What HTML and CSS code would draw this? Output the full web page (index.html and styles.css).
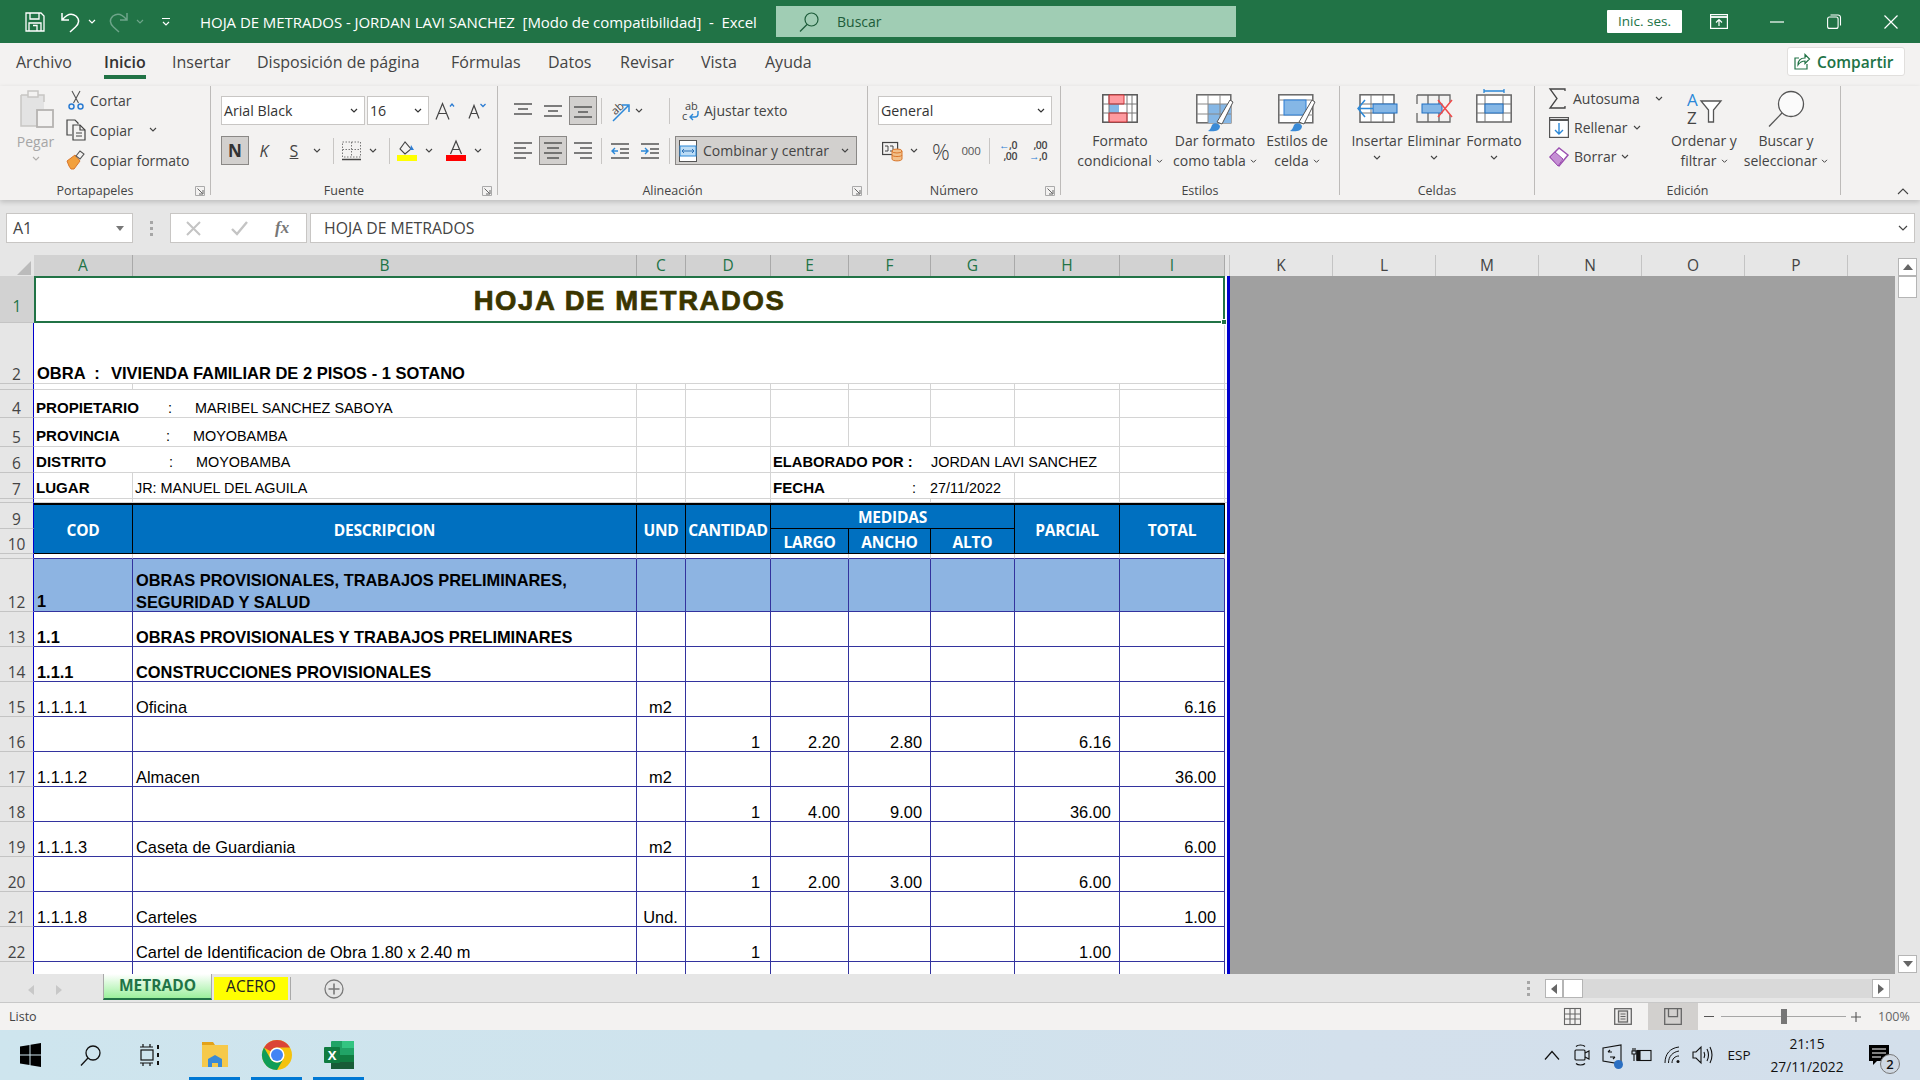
FILE: index.html
```html
<!DOCTYPE html>
<html lang="es">
<head>
<meta charset="utf-8">
<title>HOJA DE METRADOS - Excel</title>
<link rel="stylesheet" href="styles.css">
</head>
<body>
<div class="app">

<header class="titlebar">
  <div class="qat">
    <svg class="q-save" width="20" height="20" viewBox="0 0 20 20" fill="none" stroke="#fff" stroke-width="1.3"><path d="M1 1h15l3 3v15H1z"/><path d="M5 1v6h9V1M4 19v-8h12v8M8 13.500h4v5.500"/></svg>
    <svg class="q-undo" width="20" height="22" viewBox="0 0 20 22" fill="none" stroke="#fff" stroke-width="1.5"><path d="M1 2v7h7M1.500 8.500C6 3 11 2 15 5c4 3.500 3 8-.5 11L9 21"/></svg>
    <svg class="q-ch" width="8" height="6" viewBox="0 0 8 6" fill="none" stroke="#fff" stroke-width="1.200"><path d="M1 1l3 3 3-3"/></svg>
    <svg class="q-redo" width="20" height="22" viewBox="0 0 20 22" fill="none" stroke="#6ea58a" stroke-width="1.5"><path d="M19 2v7h-7M18.500 8.500C14 3 9 2 5 5c-4 3.500-3 8 .5 11l5.500 5"/></svg>
    <svg class="q-ch2" width="8" height="6" viewBox="0 0 8 6" fill="none" stroke="#6ea58a" stroke-width="1.200"><path d="M1 1l3 3 3-3"/></svg>
    <svg class="q-cust" width="10" height="10" viewBox="0 0 10 10" fill="none" stroke="#fff" stroke-width="1.200"><path d="M1 1.500h8M2 5l3 3 3-3"/></svg>
  </div>
  <div class="doc-title">HOJA DE METRADOS - JORDAN LAVI SANCHEZ &nbsp;[Modo de compatibilidad] &nbsp;- &nbsp;Excel</div>
  <div class="search">
    <svg width="20" height="20" viewBox="0 0 20 20" fill="none" stroke="#1d5c3a" stroke-width="1.2"><circle cx="12.500" cy="7.500" r="6.500"/><path d="M8 12.500L1 19.500"/></svg>
    <span>Buscar</span>
  </div>
  <div class="signin">Inic. ses.</div>
  <div class="winbtn w-box"><svg width="18" height="15" viewBox="0 0 18 15" fill="none" stroke="#fff" stroke-width="1.200"><rect x=".6" y=".6" width="16.800" height="13.800"/><path d="M.6 3h16.800" stroke-width="1.800"/><path d="M9 12V6M6 8.500L9 5.500l3 3"/></svg></div>
  <div class="winbtn w-min"><svg width="14" height="2" viewBox="0 0 14 2"><path d="M0 1h14" stroke="#fff" stroke-width="1.200"/></svg></div>
  <div class="winbtn w-res"><svg width="14" height="15" viewBox="0 0 14 15" fill="none" stroke="#fff" stroke-width="1.100"><rect x=".6" y="3" width="10.500" height="11.400" rx="2"/><path d="M3.500 1h7.500a2.500 2.500 0 0 1 2.500 2.500v8"/></svg></div>
  <div class="winbtn w-close"><svg width="14" height="14" viewBox="0 0 14 14"><path d="M.5.5l13 13M13.500.5l-13 13" stroke="#fff" stroke-width="1.200"/></svg></div>
</header>

<nav class="menubar">
  <span class="m m-arch">Archivo</span>
  <span class="m m-ini">Inicio</span>
  <span class="m m-ins">Insertar</span>
  <span class="m m-dis">Disposición de página</span>
  <span class="m m-for">Fórmulas</span>
  <span class="m m-dat">Datos</span>
  <span class="m m-rev">Revisar</span>
  <span class="m m-vis">Vista</span>
  <span class="m m-ayu">Ayuda</span>
  <div class="share">
    <svg width="16" height="17" viewBox="0 0 16 17" fill="none" stroke="#217346" stroke-width="1.200"><path d="M5 5H1v11h12v-5"/><path d="M4 12c0-5 3-7 7-7V1.500L15.500 6 11 10.500V8c-3 0-5 1-7 4z"/></svg>
    <span>Compartir</span>
  </div>
</nav>

<section class="ribbon">

  <div class="grp g-clip">
    <div class="grp-body clip-body">
      <div class="paste">
        <svg width="34" height="38" viewBox="0 0 34 38" fill="none" stroke="#c8c6c4" stroke-width="1.500"><rect x="1" y="5" width="23" height="31" fill="#e3e3e3" stroke="none"/><path d="M1 5h23v7M1 5v31h17"/><rect x="8" y="1" width="10" height="6" fill="#f3f2f1"/><rect x="17" y="20" width="16" height="17" fill="#f3f2f1" stroke="#b5b3b1" stroke-width="1.800"/></svg>
        <span class="big-t dim">Pegar</span>
        <svg class="chv" width="8" height="6" viewBox="0 0 8 6" fill="none" stroke="#b0aeac" stroke-width="1.100"><path d="M1 1l3 3 3-3"/></svg>
      </div>
      <div class="clip-list">
        <div class="cl-row">
          <svg width="20" height="20" viewBox="0 0 20 20" fill="none" stroke="#555" stroke-width="1.100"><path d="M6 1l6.500 12M14 1L7.500 13"/><circle cx="5.500" cy="16.500" r="2.500" stroke="#2b7cd3" stroke-width="1.500"/><circle cx="14.500" cy="16.500" r="2.500" stroke="#2b7cd3" stroke-width="1.500"/></svg>
          <span>Cortar</span>
        </div>
        <div class="cl-row">
          <svg width="20" height="22" viewBox="0 0 20 22" fill="none" stroke="#444" stroke-width="1.200"><path d="M6 16H1V1h8l3 3v1"/><path d="M7 6h7l5 5v10H7z"/><path d="M14 6v5h5M10 14h6M10 17h6"/></svg>
          <span>Copiar</span>
          <svg class="cp-ch" width="8" height="6" viewBox="0 0 8 6" fill="none" stroke="#444" stroke-width="1.100"><path d="M1 1l3 3 3-3"/></svg>
        </div>
        <div class="cl-row">
          <svg width="20" height="20" viewBox="0 0 20 20" fill="none"><path d="M1 11L9 5l5 6-6 8H5l-2-3z" fill="#f2a03d" stroke="#d9762b"/><path d="M10 6l4-5 4 3-4 5z" fill="#f3f2f1" stroke="#555" stroke-width="1.100"/></svg>
          <span>Copiar formato</span>
        </div>
      </div>
    </div>
    <div class="grp-foot"><span class="grp-name">Portapapeles</span><span class="launch"><svg width="10" height="10" viewBox="0 0 10 10" fill="none" stroke="#666"><path d="M.5 9.500V.5h9v9z" stroke="#aaa"/><path d="M2.500 2.500l5 5M8 4v4H4"/></svg></span></div>
  </div>

  <div class="grp g-font">
    <div class="grp-body tools">
      <div class="tb">
        <div class="combo c-font"><span>Arial Black</span><svg width="8" height="6" viewBox="0 0 8 6" fill="none" stroke="#333" stroke-width="1.200"><path d="M1 1l3 3 3-3"/></svg></div>
        <div class="combo c-size"><span>16</span><svg width="8" height="6" viewBox="0 0 8 6" fill="none" stroke="#333" stroke-width="1.200"><path d="M1 1l3 3 3-3"/></svg></div>
        <div class="bt w32"><svg width="20" height="18" viewBox="0 0 20 18" fill="none" stroke="#444" stroke-width="1.200"><path d="M1 17.500L7.500 1.500 14 17.500M3.500 11.500h8"/><path d="M15 4.500L17 2l2 2.500" stroke="#2b7cd3" stroke-width="1.300"/></svg></div>
        <div class="bt w32"><svg width="18" height="16" viewBox="0 0 18 16" fill="none" stroke="#444" stroke-width="1.200"><path d="M1 15.500L6 2.500l5 13M3 10.500h6"/><path d="M12.500 1L15 3.500 17.500 1" stroke="#2b7cd3" stroke-width="1.300"/></svg></div>
      </div>
      <div class="tb">
        <div class="bt w28 on"><b class="t-n">N</b></div>
        <div class="bt w30"><i class="t-k">K</i></div>
        <div class="bt w30"><span class="t-s">S</span></div>
        <div class="bt w16"><svg width="8" height="6" viewBox="0 0 8 6" fill="none" stroke="#444" stroke-width="1.100"><path d="M1 1l3 3 3-3"/></svg></div>
        <div class="bt w16"><i class="sep"></i></div>
        <div class="bt w20"><svg width="19" height="20" viewBox="0 0 19 20" fill="none"><path d="M.5 1h18v15H.5zM9.500 1v15M.5 8.500h18" stroke="#777" stroke-dasharray="1.500 1.500"/><path d="M0 18.500h19" stroke="#444" stroke-width="1.500"/></svg></div>
        <div class="bt w24"><svg width="8" height="6" viewBox="0 0 8 6" fill="none" stroke="#444" stroke-width="1.100"><path d="M1 1l3 3 3-3"/></svg></div>
        <div class="bt w8"><i class="sep"></i></div>
        <div class="bt w28"><svg width="20" height="20" viewBox="0 0 20 20" fill="none"><path d="M8 1L3 8l5 5 6-5z" stroke="#444" stroke-width="1.100"/><path d="M14 4l3 5h-4z" fill="#2b7cd3"/><rect y="14" width="20" height="6" fill="#ffff00"/></svg></div>
        <div class="bt w16"><svg width="8" height="6" viewBox="0 0 8 6" fill="none" stroke="#444" stroke-width="1.100"><path d="M1 1l3 3 3-3"/></svg></div>
        <div class="bt w38"><svg width="20" height="21" viewBox="0 0 20 21" fill="none"><path d="M4.500 14L10 1l5.500 13M6.500 9.500h7" stroke="#444" stroke-width="1.200"/><rect y="15" width="20" height="6" fill="#ff0000"/></svg></div>
        <div class="bt w6"><svg class="ovr" width="8" height="6" viewBox="0 0 8 6" fill="none" stroke="#444" stroke-width="1.100"><path d="M1 1l3 3 3-3"/></svg></div>
      </div>
    </div>
    <div class="grp-foot"><span class="grp-name">Fuente</span><span class="launch"><svg width="10" height="10" viewBox="0 0 10 10" fill="none" stroke="#666"><path d="M.5 9.500V.5h9v9z" stroke="#aaa"/><path d="M2.500 2.500l5 5M8 4v4H4"/></svg></span></div>
  </div>

  <div class="grp g-align">
    <div class="grp-body tools">
      <div class="tb">
        <div class="bt w28"><svg width="18" height="15" viewBox="0 0 18 15" stroke="#555" stroke-width="1.300"><path d="M0 1h18M4 6h10M0 11h18"/></svg></div>
        <div class="bt w28 gap2"><svg width="18" height="15" viewBox="0 0 18 15" stroke="#555" stroke-width="1.300"><path d="M0 3h18M4 8h10M0 13h18"/></svg></div>
        <div class="bt w28 on gap2"><svg width="18" height="15" viewBox="0 0 18 15" stroke="#555" stroke-width="1.300"><path d="M0 4h18M4 9h10M0 14h18"/></svg></div>
        <div class="bt w8"><i class="sep"></i></div>
        <div class="bt w30"><svg width="22" height="22" viewBox="0 0 22 22" fill="none"><text x="3" y="13" transform="rotate(-42 8 10)" class="svg-ab">ab</text><path d="M4 21L19 6M13 5h7v7" stroke="#2b88d8" stroke-width="1.500"/></svg></div>
        <div class="bt w8"><svg class="ovr" width="8" height="6" viewBox="0 0 8 6" fill="none" stroke="#444" stroke-width="1.100"><path d="M1 1l3 3 3-3"/></svg></div>
        <div class="bt w22"></div>
        <div class="bt w8"><i class="sep"></i></div>
        <div class="wrap-b">
          <svg width="18" height="22" viewBox="0 0 18 22"><text x="3" y="10" class="svg-ab">ab</text><text x="0" y="20" class="svg-ab">c</text><path d="M16 11v3a3 3 0 0 1-3 3H8M11 14l-3 3 3 3" fill="none" stroke="#2b88d8" stroke-width="1.400"/></svg>
          <span>Ajustar texto</span>
        </div>
      </div>
      <div class="tb">
        <div class="bt w28"><svg width="18" height="17" viewBox="0 0 18 17" stroke="#555" stroke-width="1.300"><path d="M0 1h18M0 6h12M0 11h18M0 16h12"/></svg></div>
        <div class="bt w28 on gap2"><svg width="18" height="17" viewBox="0 0 18 17" stroke="#555" stroke-width="1.300"><path d="M0 1h18M3 6h12M0 11h18M3 16h12"/></svg></div>
        <div class="bt w28 gap2"><svg width="18" height="17" viewBox="0 0 18 17" stroke="#555" stroke-width="1.300"><path d="M0 1h18M6 6h12M0 11h18M6 16h12"/></svg></div>
        <div class="bt w8"><i class="sep"></i></div>
        <div class="bt w30"><svg width="18" height="16" viewBox="0 0 18 16" fill="none"><path d="M0 1h18M9 6h9M9 10h9M0 15h18" stroke="#555" stroke-width="1.300"/><path d="M7 8H1M4 5L1 8l3 3" stroke="#2b88d8" stroke-width="1.400"/></svg></div>
        <div class="bt w30"><svg width="18" height="16" viewBox="0 0 18 16" fill="none"><path d="M0 1h18M9 6h9M9 10h9M0 15h18" stroke="#555" stroke-width="1.300"/><path d="M0 8h6M4 5l3 3-3 3" stroke="#2b88d8" stroke-width="1.400"/></svg></div>
        <div class="bt w8"><i class="sep"></i></div>
        <div class="merge">
          <svg width="18" height="22" viewBox="0 0 18 22" fill="#fff"><rect x=".5" y=".5" width="17" height="21" stroke="#555"/><rect x="1" y="6" width="16" height="10" fill="#bcdcf5" stroke="#2b88d8"/><path d="M3 11h12M5 9l-2 2 2 2M13 9l2 2-2 2" fill="none" stroke="#2b6fb3"/></svg>
          <span>Combinar y centrar</span>
          <svg class="m-ch" width="8" height="6" viewBox="0 0 8 6" fill="none" stroke="#444" stroke-width="1.100"><path d="M1 1l3 3 3-3"/></svg>
        </div>
      </div>
    </div>
    <div class="grp-foot"><span class="grp-name">Alineación</span><span class="launch"><svg width="10" height="10" viewBox="0 0 10 10" fill="none" stroke="#666"><path d="M.5 9.500V.5h9v9z" stroke="#aaa"/><path d="M2.500 2.500l5 5M8 4v4H4"/></svg></span></div>
  </div>

  <div class="grp g-num">
    <div class="grp-body tools">
      <div class="tb">
        <div class="combo c-num"><span>General</span><svg width="8" height="6" viewBox="0 0 8 6" fill="none" stroke="#333" stroke-width="1.200"><path d="M1 1l3 3 3-3"/></svg></div>
      </div>
      <div class="tb">
        <div class="bt w28"><svg width="21" height="20" viewBox="0 0 21 20" fill="none"><rect x=".6" y="1.500" width="15" height="12" stroke="#444" stroke-width="1.200"/><path d="M3 5h3v5H3M8 5h3v5H8" stroke="#444"/><path d="M10 10v8c0 2.500 10 2.500 10 0v-8" fill="#f2c08a" stroke="#d9762b"/><ellipse cx="15" cy="10" rx="5" ry="2" fill="#f2c08a" stroke="#d9762b"/><path d="M10 14c0 2 10 2 10 0" stroke="#d9762b"/></svg></div>
        <div class="bt w16"><svg width="8" height="6" viewBox="0 0 8 6" fill="none" stroke="#444" stroke-width="1.100"><path d="M1 1l3 3 3-3"/></svg></div>
        <div class="bt w38"><span class="t-pct">%</span></div>
        <div class="bt w22"><span class="t-000">000</span></div>
        <div class="bt w14"><i class="sep"></i></div>
        <div class="bt w24"><span class="dec"><span class="dec-a">←<span class="dec-k">,0</span></span><span>,00</span></span></div>
        <div class="bt w36"><span class="dec"><span>,00</span><span class="dec-a">→<span class="dec-k">,0</span></span></span></div>
      </div>
    </div>
    <div class="grp-foot"><span class="grp-name">Número</span><span class="launch"><svg width="10" height="10" viewBox="0 0 10 10" fill="none" stroke="#666"><path d="M.5 9.500V.5h9v9z" stroke="#aaa"/><path d="M2.500 2.500l5 5M8 4v4H4"/></svg></span></div>
  </div>

  <div class="grp g-sty">
    <div class="grp-body bigs sty-cols">
      <div class="big">
        <div class="big-ic"><svg width="36" height="29" viewBox="0 0 36 29" fill="#fff"><rect x=".8" y=".8" width="34.400" height="27.400" stroke="#555" stroke-width="1.500"/><rect x="7" y="1" width="15" height="9" fill="#ff9a9f"/><rect x="7" y="10" width="10" height="9" fill="#85b7e6"/><rect x="7" y="19" width="18" height="9" fill="#ff9a9f"/><path d="M7 1v27M25 1v27M30 1v27M1 10h34M1 19h34" stroke="#777" fill="none"/><path d="M7 1h15v9H7zM7 19h18v9H7z" stroke="#d13438" fill="none"/></svg></div>
        <span class="big-t">Formato</span><span class="big-t">condicional <svg width="7" height="5" viewBox="0 0 8 6" fill="none" stroke="#444" stroke-width="1.200"><path d="M1 1l3 3 3-3"/></svg></span>
      </div>
      <div class="big">
        <div class="big-ic"><svg width="38" height="40" viewBox="0 0 38 40" fill="#fff"><rect x=".8" y=".8" width="34" height="28" stroke="#666" stroke-width="1.500"/><rect x="12" y="10" width="23" height="19" fill="#85b7e6"/><path d="M12 1v28M24 1v28M1 10h34M1 20h34" stroke="#888" fill="none"/><path d="M21 28L34 6l3 2-11 22z" fill="#fff" stroke="#555"/><path d="M12 37c2-1 3-3 4-6 2-3 7-2 8 1 0 5-6 6-12 5z" fill="#3a8ad6"/></svg></div>
        <span class="big-t">Dar formato</span><span class="big-t">como tabla <svg width="7" height="5" viewBox="0 0 8 6" fill="none" stroke="#444" stroke-width="1.200"><path d="M1 1l3 3 3-3"/></svg></span>
      </div>
      <div class="big">
        <div class="big-ic"><svg width="38" height="40" viewBox="0 0 38 40" fill="#fff"><rect x=".8" y=".8" width="34" height="28" stroke="#666" stroke-width="1.500"/><path d="M1 6h34M1 21h34" stroke="#888" fill="none"/><rect x="6" y="6" width="22" height="15" fill="#85b7e6" stroke="#2b7cd3"/><path d="M21 28L34 6l3 2-11 22z" fill="#fff" stroke="#555"/><path d="M12 37c2-1 3-3 4-6 2-3 7-2 8 1 0 5-6 6-12 5z" fill="#3a8ad6"/></svg></div>
        <span class="big-t">Estilos de</span><span class="big-t">celda <svg width="7" height="5" viewBox="0 0 8 6" fill="none" stroke="#444" stroke-width="1.200"><path d="M1 1l3 3 3-3"/></svg></span>
      </div>
    </div>
    <div class="grp-foot"><span class="grp-name">Estilos</span></div>
  </div>

  <div class="grp g-cel">
    <div class="grp-body bigs cel-cols">
      <div class="big">
        <div class="big-ic"><svg width="40" height="29" viewBox="0 0 40 29" fill="#fff"><rect x="3" y=".8" width="34" height="27.400" stroke="#666" stroke-width="1.500"/><path d="M14 1v27M26 1v27M3 10h34M3 19h34" stroke="#777" fill="none"/><rect x="16" y="10" width="24" height="9" fill="#85b7e6" stroke="#1f6fc2"/><path d="M16 14.500H2M8 6L1 14.500 8 23" fill="none" stroke="#2b88d8" stroke-width="1.500"/></svg></div>
        <span class="big-t">Insertar</span>
        <svg class="chv" width="8" height="6" viewBox="0 0 8 6" fill="none" stroke="#444" stroke-width="1.100"><path d="M1 1l3 3 3-3"/></svg>
      </div>
      <div class="big">
        <div class="big-ic"><svg width="37" height="29" viewBox="0 0 37 29" fill="#fff"><path d="M1 1h33v7M1 1v9M1 19v9h33v-7M12 1v9M23 1v9M12 19v9M23 19v9" stroke="#666" stroke-width="1.300" fill="none"/><rect x="6" y="10" width="20" height="9" fill="#85b7e6" stroke="#1f6fc2"/><path d="M22 6l14 17M36 6L22 23" stroke="#f04a4a" stroke-width="1.500"/></svg></div>
        <span class="big-t">Eliminar</span>
        <svg class="chv" width="8" height="6" viewBox="0 0 8 6" fill="none" stroke="#444" stroke-width="1.100"><path d="M1 1l3 3 3-3"/></svg>
      </div>
      <div class="big">
        <div class="big-ic ic-up"><svg width="36" height="34" viewBox="0 0 36 34" fill="#fff"><path d="M8 2h20M8 0v4M28 0v4" stroke="#2b88d8" fill="none" stroke-width="1.300"/><rect x=".8" y="6" width="34.400" height="27" stroke="#666" stroke-width="1.500"/><path d="M9 6v27M27 6v27M1 15h34M1 24h34" stroke="#777" fill="none"/><rect x="9" y="15" width="18" height="9" fill="#85b7e6" stroke="#1f6fc2"/></svg></div>
        <span class="big-t">Formato</span>
        <svg class="chv" width="8" height="6" viewBox="0 0 8 6" fill="none" stroke="#444" stroke-width="1.100"><path d="M1 1l3 3 3-3"/></svg>
      </div>
    </div>
    <div class="grp-foot"><span class="grp-name">Celdas</span></div>
  </div>

  <div class="grp g-edi">
    <div class="grp-body bigs edi-cols">
      <div class="edi-list">
        <div class="ed-row">
          <svg class="sigma" width="17" height="21" viewBox="0 0 17 21" fill="none" stroke="#444" stroke-width="1.300"><path d="M16 3V1H1l7 9.500L1 20h15v-2"/></svg>
          <span>Autosuma</span>
          <svg class="ed-ch1" width="8" height="6" viewBox="0 0 8 6" fill="none" stroke="#444" stroke-width="1.100"><path d="M1 1l3 3 3-3"/></svg>
        </div>
        <div class="ed-row">
          <svg width="20" height="21" viewBox="0 0 20 21" fill="#fff"><rect x=".6" y=".6" width="18.800" height="19.800" stroke="#555" stroke-width="1.200"/><path d="M1 3h18" stroke="#555" stroke-width="2"/><path d="M10 6v11M6 13l4 4 4-4" fill="none" stroke="#2b88d8" stroke-width="1.400"/></svg>
          <span>Rellenar</span>
          <svg width="8" height="6" viewBox="0 0 8 6" fill="none" stroke="#444" stroke-width="1.100"><path d="M1 1l3 3 3-3"/></svg>
        </div>
        <div class="ed-row">
          <svg width="20" height="20" viewBox="0 0 20 20"><path d="M1 10L10 1l9 7-9 11z" fill="#fff" stroke="#9b4fb0" stroke-width="1.500"/><path d="M1 10l5-5 8 7-5 7z" fill="#c58fd4" stroke="#9b4fb0"/></svg>
          <span>Borrar</span>
          <svg width="8" height="6" viewBox="0 0 8 6" fill="none" stroke="#444" stroke-width="1.100"><path d="M1 1l3 3 3-3"/></svg>
        </div>
      </div>
      <div class="big">
        <div class="big-ic ic-mid"><svg width="36" height="34" viewBox="0 0 36 34"><text x="1" y="15" class="svg-az a">A</text><text x="1" y="33" class="svg-az">Z</text><path d="M15 10h20l-7.500 9v12h-5V19z" fill="#fff" stroke="#555" stroke-width="1.300"/></svg></div>
        <span class="big-t">Ordenar y</span><span class="big-t">filtrar <svg width="7" height="5" viewBox="0 0 8 6" fill="none" stroke="#444" stroke-width="1.200"><path d="M1 1l3 3 3-3"/></svg></span>
      </div>
      <div class="big">
        <div class="big-ic ic-mid"><svg width="36" height="36" viewBox="0 0 36 36" fill="none" stroke="#555" stroke-width="1.300"><circle cx="23" cy="13" r="12.500" fill="#fbfbfb"/><path d="M14 22L1 35.500"/></svg></div>
        <span class="big-t">Buscar y</span><span class="big-t">seleccionar <svg width="7" height="5" viewBox="0 0 8 6" fill="none" stroke="#444" stroke-width="1.200"><path d="M1 1l3 3 3-3"/></svg></span>
      </div>
    </div>
    <div class="grp-foot"><span class="grp-name">Edición</span></div>
  </div>

  <div class="collapse"><svg width="12" height="7" viewBox="0 0 12 7" fill="none" stroke="#444" stroke-width="1.100"><path d="M1 6l5-5 5 5"/></svg></div>
</section>

<section class="formula">
  <div class="namebox"><span>A1</span><svg width="8" height="5" viewBox="0 0 8 5"><path d="M0 0h8L4 5z" fill="#777"/></svg></div>
  <div class="fdots"><i></i><i></i><i></i></div>
  <div class="fbtns">
    <svg width="15" height="15" viewBox="0 0 15 15" stroke="#c4c4c4" stroke-width="2"><path d="M1 1l13 13M14 1L1 14"/></svg>
    <svg width="17" height="15" viewBox="0 0 17 15" fill="none" stroke="#c4c4c4" stroke-width="2.400"><path d="M1 8l5 5L16 1"/></svg>
    <span class="fx">fx</span>
  </div>
  <div class="fbox"><span>HOJA DE METRADOS</span><svg width="10" height="6" viewBox="0 0 10 6" fill="none" stroke="#444" stroke-width="1.200"><path d="M1 1l4 4 4-4"/></svg></div>
</section>

<section class="grid-wrap">
  <div class="grid-main">
    <div class="colhead">
      <div class="corner"><svg width="14" height="14" viewBox="0 0 14 14"><path d="M14 0v14H0z" fill="#bbb"/></svg></div>
      <div class="ch sel a">A</div><div class="ch sel b">B</div><div class="ch sel c">C</div><div class="ch sel d">D</div><div class="ch sel e">E</div><div class="ch sel f">F</div><div class="ch sel g">G</div><div class="ch sel h">H</div><div class="ch sel i">I</div>
      <div class="ch j"></div>
      <div class="ch k">K</div><div class="ch k">L</div><div class="ch k">M</div><div class="ch k">N</div><div class="ch k">O</div><div class="ch k">P</div><div class="ch rest"></div>
    </div>
    <div class="sheet-row">
      <div class="sheet-clip">
      <table class="sheet">
        <colgroup><col class="k-rh"><col class="k-a"><col class="k-b"><col class="k-c"><col class="k-d"><col class="k-e"><col class="k-f"><col class="k-g"><col class="k-h"><col class="k-i"><col class="k-j"></colgroup>
        <tr class="h47"><th class="sel">1</th><td colspan="9" class="title"><span>HOJA DE METRADOS</span><i class="handle"></i></td><td class="jc"></td></tr>
        <tr class="h61"><th>2</th><td colspan="9" class="obra bold"><span class="obra-k">OBRA &nbsp;:</span>VIVIENDA FAMILIAR DE 2 PISOS - 1 SOTANO</td><td class="jc"></td></tr>
        <tr class="h6"><th></th><td></td><td></td><td></td><td></td><td></td><td></td><td></td><td></td><td></td><td class="jc"></td></tr>
        <tr class="h28"><th>4</th><td colspan="2" class="info"><b class="lab p1">PROPIETARIO</b><span class="col p2">:</span><span class="val">MARIBEL SANCHEZ SABOYA</span></td><td></td><td></td><td></td><td></td><td></td><td></td><td></td><td class="jc"></td></tr>
        <tr class="h29"><th>5</th><td colspan="2" class="info"><b class="lab p3">PROVINCIA</b><span class="col p2">:</span><span class="val">MOYOBAMBA</span></td><td></td><td></td><td></td><td></td><td></td><td></td><td></td><td class="jc"></td></tr>
        <tr class="h26"><th>6</th><td colspan="2" class="info"><b class="lab p4">DISTRITO</b><span class="col p2">:</span><span class="val">MOYOBAMBA</span></td><td></td><td></td><td colspan="4" class="info"><b class="lab p5">ELABORADO POR :</b><span class="val v2">JORDAN LAVI SANCHEZ</span></td><td></td><td class="jc"></td></tr>
        <tr class="h26"><th>7</th><td class="info"><b class="lab">LUGAR</b></td><td class="plain">JR: MANUEL DEL AGUILA</td><td></td><td></td><td colspan="3" class="info"><b class="lab p6">FECHA</b><span class="col p7">:</span><span class="val v3">27/11/2022</span></td><td></td><td></td><td class="jc"></td></tr>
        <tr class="h4"><th></th><td></td><td></td><td></td><td></td><td></td><td></td><td></td><td></td><td></td><td class="jc"></td></tr>
        <tr class="h26 hd"><th>9</th><td rowspan="2">COD</td><td rowspan="2">DESCRIPCION</td><td rowspan="2">UND</td><td rowspan="2">CANTIDAD</td><td colspan="3">MEDIDAS</td><td rowspan="2">PARCIAL</td><td rowspan="2">TOTAL</td><td class="jc"></td></tr>
        <tr class="h25 hd hd2"><th>10</th><td>LARGO</td><td>ANCHO</td><td>ALTO</td><td class="jc"></td></tr>
        <tr class="h5 sp"><th></th><td></td><td></td><td></td><td></td><td></td><td></td><td></td><td></td><td></td><td class="jc"></td></tr>
        <tr class="h53 d fill"><th>12</th><td class="bold">1</td><td class="bold"><div class="two">OBRAS PROVISIONALES, TRABAJOS PRELIMINARES,<br>SEGURIDAD Y SALUD</div></td><td></td><td></td><td></td><td></td><td></td><td></td><td></td><td class="jc"></td></tr>
        <tr class="h35 d"><th>13</th><td class="bold">1.1</td><td class="bold">OBRAS PROVISIONALES Y TRABAJOS PRELIMINARES</td><td></td><td></td><td></td><td></td><td></td><td></td><td></td><td class="jc"></td></tr>
        <tr class="h35 d"><th>14</th><td class="bold">1.1.1</td><td class="bold">CONSTRUCCIONES PROVISIONALES</td><td></td><td></td><td></td><td></td><td></td><td></td><td></td><td class="jc"></td></tr>
        <tr class="h35 d"><th>15</th><td>1.1.1.1</td><td>Oficina</td><td class="ctr">m2</td><td></td><td></td><td></td><td></td><td></td><td class="num">6.16</td><td class="jc"></td></tr>
        <tr class="h35 d"><th>16</th><td></td><td></td><td></td><td class="num q">1</td><td class="num">2.20</td><td class="num">2.80</td><td></td><td class="num">6.16</td><td></td><td class="jc"></td></tr>
        <tr class="h35 d"><th>17</th><td>1.1.1.2</td><td>Almacen</td><td class="ctr">m2</td><td></td><td></td><td></td><td></td><td></td><td class="num">36.00</td><td class="jc"></td></tr>
        <tr class="h35 d"><th>18</th><td></td><td></td><td></td><td class="num q">1</td><td class="num">4.00</td><td class="num">9.00</td><td></td><td class="num">36.00</td><td></td><td class="jc"></td></tr>
        <tr class="h35 d"><th>19</th><td>1.1.1.3</td><td>Caseta de Guardiania</td><td class="ctr">m2</td><td></td><td></td><td></td><td></td><td></td><td class="num">6.00</td><td class="jc"></td></tr>
        <tr class="h35 d"><th>20</th><td></td><td></td><td></td><td class="num q">1</td><td class="num">2.00</td><td class="num">3.00</td><td></td><td class="num">6.00</td><td></td><td class="jc"></td></tr>
        <tr class="h35 d"><th>21</th><td>1.1.1.8</td><td>Carteles</td><td class="ctr">Und.</td><td></td><td></td><td></td><td></td><td></td><td class="num">1.00</td><td class="jc"></td></tr>
        <tr class="h35 d"><th>22</th><td></td><td>Cartel de Identificacion de Obra 1.80 x 2.40 m</td><td></td><td class="num q">1</td><td></td><td></td><td></td><td class="num">1.00</td><td></td><td class="jc"></td></tr>
        <tr class="h35 d"><th></th><td></td><td></td><td></td><td></td><td></td><td></td><td></td><td></td><td></td><td class="jc"></td></tr>
      </table>
      </div>
      <div class="outside"></div>
    </div>
  </div>
  <aside class="vscroll">
    <div class="sb-btn"><svg width="10" height="6" viewBox="0 0 10 6"><path d="M5 0l5 6H0z" fill="#666"/></svg></div>
    <div class="sb-thumb"></div>
    <div class="sb-fill"></div>
    <div class="sb-btn"><svg width="10" height="6" viewBox="0 0 10 6"><path d="M0 0h10L5 6z" fill="#666"/></svg></div>
  </aside>
</section>

<section class="tabbar">
  <div class="tabnav">
    <svg width="6" height="10" viewBox="0 0 6 10"><path d="M6 0v10L0 5z" fill="#c8c8c8"/></svg>
    <svg width="6" height="10" viewBox="0 0 6 10"><path d="M0 0v10l6-5z" fill="#c8c8c8"/></svg>
  </div>
  <div class="tab t-met">METRADO</div>
  <div class="tab t-ace">ACERO</div>
  <div class="tab-end"></div>
  <div class="addsheet"><svg width="20" height="20" viewBox="0 0 20 20" fill="none" stroke="#7a7a7a" stroke-width="1.300"><circle cx="10" cy="10" r="9"/><path d="M10 4.500v11M4.500 10h11" stroke-width="1.600"/></svg></div>
  <div class="hdots"><i></i><i></i><i></i></div>
  <div class="hscroll">
    <div class="hb"><svg width="6" height="10" viewBox="0 0 6 10"><path d="M6 0v10L0 5z" fill="#666"/></svg></div>
    <div class="hthumb"></div>
    <div class="htrack"></div>
    <div class="hb"><svg width="6" height="10" viewBox="0 0 6 10"><path d="M0 0v10l6-5z" fill="#666"/></svg></div>
  </div>
</section>

<footer class="status">
  <span class="ready">Listo</span>
  <div class="views">
    <div class="vw"><svg width="17" height="17" viewBox="0 0 17 17" fill="none" stroke="#666" stroke-width="1.100"><rect x=".5" y=".5" width="16" height="16"/><path d="M6 .5v16M11 .5v16M.5 6h16M.5 11h16"/></svg></div>
    <div class="vw"><svg width="18" height="17" viewBox="0 0 18 17" fill="none" stroke="#666" stroke-width="1.300"><rect x=".7" y=".7" width="16.600" height="15.600"/><rect x="4.500" y="3" width="9" height="11" fill="#e1dfdd"/><path d="M6.500 6h5M6.500 8.500h5M6.500 11h5" stroke-width="1"/></svg></div>
    <div class="vw on"><svg width="18" height="17" viewBox="0 0 18 17" fill="none" stroke="#666" stroke-width="1.300"><path d="M.7.7h16.600v15.600H.7zM4.500.7v8h9V.7"/></svg></div>
  </div>
  <div class="zoom">
    <span class="z-minus"></span>
    <div class="z-track"><i></i></div>
    <svg width="10" height="10" viewBox="0 0 10 10" stroke="#555" stroke-width="1.100"><path d="M5 0v10M0 5h10"/></svg>
    <span class="z-pct">100%</span>
  </div>
</footer>

<footer class="taskbar">
  <div class="tk w60"><svg width="21" height="24" viewBox="0 0 21 24" fill="#000"><path d="M0 3.500L9.500 2v9.500H0zM10.500 1.800L21 0v11.500H10.500zM0 12.500h9.500V22L0 20.500zM10.500 12.500H21V24l-10.500-1.800z"/></svg></div>
  <div class="tk w60"><svg width="21" height="21" viewBox="0 0 21 21" fill="none" stroke="#111" stroke-width="1.300"><circle cx="13" cy="8" r="7"/><path d="M8 13L1 20.500"/></svg></div>
  <div class="tk w60"><svg width="20" height="22" viewBox="0 0 20 22" fill="none" stroke="#111" stroke-width="1.200"><rect x="1" y="6" width="12" height="10"/><path d="M0 3h13M0 19h13M3 0v3M10 0v3M3 19v3M10 19v3"/><path d="M18 1v4M18 9v4M18 17v4" stroke-width="2"/></svg></div>
  <div class="tk app-ic first"><svg width="28" height="28" viewBox="0 0 28 28"><path d="M1 1h11l2 3H1z" fill="#e3a21a"/><rect x="1" y="4" width="26" height="22" fill="#f6c94b"/><path d="M7 18l7-4 7 4v8h-4v-4h-6v4H7z" fill="#3a8ad6"/></svg></div>
  <div class="tk app-ic"><svg width="30" height="30" viewBox="0 0 30 30"><circle cx="15" cy="15" r="15" fill="#f4c20d"/><path d="M15 0a15 15 0 0 1 13 7.500H15a7.500 7.500 0 0 0-6.500 3.750L2 7.500A15 15 0 0 1 15 0z" fill="#db4437"/><path d="M2 7.500A15 15 0 0 0 15 30l6.500-11.250a7.500 7.500 0 0 1-13 0z" fill="#0f9d58"/><circle cx="15" cy="15" r="7.500" fill="#fff"/><circle cx="15" cy="15" r="6" fill="#4285f4"/></svg></div>
  <div class="tk app-ic"><svg width="30" height="30" viewBox="0 0 30 30"><rect x="7" y="1" width="23" height="28" rx="1" fill="#21a366"/><rect x="18" y="1" width="12" height="7" fill="#33c481"/><rect x="18" y="8" width="12" height="7" fill="#21a366"/><rect x="7" y="15" width="11" height="7" fill="#107c41"/><rect x="18" y="15" width="12" height="7" fill="#107c41"/><rect x="7" y="22" width="23" height="7" fill="#185c37"/><rect y="7" width="16" height="16" rx="1" fill="#107c41"/><text x="8" y="19.500" class="svg-x">X</text></svg></div>
  <div class="tray">
    <div class="ty w30"><svg width="16" height="10" viewBox="0 0 16 10" fill="none" stroke="#111" stroke-width="1.200"><path d="M1 9.500l7-8 7 8"/></svg></div>
    <div class="ty w30"><svg width="16" height="22" viewBox="0 0 16 22" fill="none" stroke="#111" stroke-width="1.100"><rect x="1" y="6" width="10" height="10" rx="1"/><path d="M11 9l4-2v8l-4-2M2 2.500c2-2 7-2 9 0M2 19.500c2 2 7 2 9 0"/></svg></div>
    <div class="ty w30 rel"><svg width="20" height="22" viewBox="0 0 20 22" fill="none" stroke="#111" stroke-width="1.100"><path d="M1 4l18-3v19L1 17z"/><path d="M6 8h4M6 8l2-2M13 13H8M13 13l-2 2"/></svg><i class="tray-dot"></i></div>
    <div class="ty w30"><svg width="20" height="14" viewBox="0 0 20 14" fill="none" stroke="#111" stroke-width="1.100"><rect x="5" y="2.500" width="14" height="10"/><path d="M3 0v3M1 0v3M0 3h4v3H0zM2 6v7"/><rect x="5" y="3" width="3" height="9" fill="#111"/></svg></div>
    <div class="ty w30"><svg width="16" height="18" viewBox="0 0 16 18" fill="none" stroke="#111" stroke-width="1"><path d="M1 17C1 8 6 2 15 1M4.500 17C4.500 10 9 6 15 5M8 17c0-4 3-7 7-7"/><circle cx="14" cy="15.500" r="1.500" fill="#111" stroke="none"/></svg></div>
    <div class="ty w30"><svg width="20" height="20" viewBox="0 0 20 20" fill="none" stroke="#111" stroke-width="1.100"><path d="M1 7h3l5-5v16l-5-5H1z"/><path d="M12 7c1 2 1 4 0 6M15 4c2 4 2 8 0 12M18 2c2.500 5 2.500 11 0 16"/></svg></div>
    <div class="ty w44 t-esp">ESP</div>
    <div class="clock"><span>21:15</span><span>27/11/2022</span></div>
    <div class="notif">
      <svg width="20" height="20" viewBox="0 0 20 20"><path d="M0 0h20v16H8l-4 4v-4H0z" fill="#000"/><path d="M3 4h14M3 8h14M3 12h9" stroke="#fff"/></svg>
      <span class="badge">2</span>
    </div>
  </div>
</footer>

</div>
</body>
</html>
```

FILE: styles.css
```css
* { box-sizing: border-box; }
html, body { margin: 0; padding: 0; }
body { width: 1920px; height: 1080px; overflow: hidden; font-family: "Open Sans", "Noto Sans", sans-serif; color: #444; background: #f3f2f1; }
svg { display: block; flex: none; overflow: visible; }
.app { display: flex; flex-direction: column; width: 1920px; height: 1080px; }

/* title bar */
.titlebar { height: 43px; flex: none; background: #217346; display: flex; align-items: center; color: #fff; }
.qat { display: flex; align-items: center; width: 200px; flex: none; padding-left: 25px; }
.q-undo { margin-left: 16px; }
.q-ch { margin-left: 7px; }
.q-redo { margin-left: 12px; }
.q-ch2 { margin-left: 8px; }
.q-cust { margin-left: 17px; }
.doc-title { width: 576px; flex: none; font-size: 15px; white-space: nowrap; letter-spacing: -.05px; }
.search { width: 460px; height: 31px; flex: none; background: #a0cdb4; display: flex; align-items: center; padding-left: 23px; color: #1d5c3a; font-size: 14px; gap: 18px; }
.signin { margin-left: 371px; width: 75px; height: 23px; background: #fff; color: #217346; font-size: 13.500px; text-align: center; line-height: 23px; border-radius: 1px; }
.winbtn { display: flex; align-items: center; justify-content: center; flex: none; }
.w-box { width: 74px; }
.w-min { width: 42px; }
.w-res { width: 72px; }
.w-close { width: 42px; margin-right: 8px; }

/* menu */
.menubar { height: 43px; flex: none; display: flex; align-items: center; position: relative; font-size: 16px; color: #444; padding-bottom: 6px; }
.m { white-space: nowrap; flex: none; }
.m-arch { margin-left: 16px; width: 88px; }
.m-ini { width: 68px; color: #333; font-weight: 600; position: relative; }
.m-ini::after { content: ""; position: absolute; left: 0; width: 42px; bottom: -6px; height: 4px; background: #217346; }
.m-ins { width: 85px; }
.m-dis { width: 194px; }
.m-for { width: 97px; }
.m-dat { width: 72px; }
.m-rev { width: 81px; }
.m-vis { width: 64px; }
.m-ayu { width: 60px; }
.share { margin-left: auto; margin-right: 15px; width: 118px; height: 29px; background: #fff; border: 1px solid #e1dfdd; border-radius: 3px; display: flex; align-items: center; padding-left: 6px; gap: 7px; color: #217346; font-weight: 600; font-size: 15.500px; }

/* ribbon */
.ribbon { height: 114px; flex: none; display: flex; box-shadow: 0 2px 5px rgba(0,0,0,.18); position: relative; z-index: 2; font-size: 14px; padding-bottom: 5px; }
.grp { display: flex; flex-direction: column; flex: none; border-right: 1px solid #bdbbb9; height: 109px; }
.g-clip { width: 211px; }
.g-font { width: 287px; }
.g-align { width: 370px; }
.g-num { width: 193px; }
.g-sty { width: 279px; }
.g-cel { width: 195px; }
.g-edi { width: 306px; }
.grp-body { flex: 1; min-height: 0; }
.grp-foot { height: 16px; margin-bottom: -4px; display: flex; flex: none; align-items: center; font-size: 12.500px; color: #444; line-height: 16px; }
.grp-name { flex: 1; text-align: center; }
.launch { width: 20px; flex: none; padding-left: 5px; }
.collapse { flex: 1; display: flex; justify-content: flex-end; align-items: flex-end; padding: 0 11px 0 0; height: 109px; }

.clip-body { display: flex; }
.paste { width: 66px; flex: none; display: flex; flex-direction: column; align-items: center; padding: 4px 0 0 5px; }
.paste > svg:first-child { margin-left: 2px; margin-bottom: 4px; }
.big-t { line-height: 20px; font-size: 14px; white-space: nowrap; color: #444; display: flex; align-items: center; gap: 4px; }
.dim { color: #a6a6a6; }
.chv { margin-top: 4px; }
.clip-list { display: flex; flex-direction: column; margin-top: -1px; }
.cl-row { height: 30px; display: flex; align-items: center; gap: 4px; white-space: nowrap; color: #444; }
.cp-ch { margin-left: 12px; }

.tools { padding-top: 10px; display: flex; flex-direction: column; gap: 11px; }
.g-font .tools { padding-left: 10px; }
.g-align .tools { padding-left: 11px; }
.g-num .tools { padding-left: 10px; }
.tb { display: flex; align-items: center; height: 29px; }
.bt { height: 29px; display: flex; align-items: center; justify-content: center; flex: none; }
.bt.on { background: #d2d0ce; border: 1px solid #8a8886; }
.gap2 { margin-left: 2px; }
.w6 { width: 6px; } .w8 { width: 8px; } .w14 { width: 14px; } .w16 { width: 16px; } .w20 { width: 20px; } .w22 { width: 22px; } .w24 { width: 24px; } .w28 { width: 28px; } .w30 { width: 30px; } .w32 { width: 32px; } .w36 { width: 36px; } .w38 { width: 38px; } .w44 { width: 44px; } .w60 { width: 60px; }
.sep { display: block; width: 1px; height: 26px; background: #c8c6c4; }
.combo { height: 29px; background: #fff; border: 1px solid #c8c6c4; display: flex; align-items: center; justify-content: space-between; padding: 0 6px 0 2px; color: #333; font-size: 14.200px; flex: none; }
.c-font { width: 144px; }
.c-size { width: 62px; margin-left: 2px; }
.c-num { width: 174px; }
.t-n { font-family: "Open Sans", sans-serif; font-weight: 700; font-size: 17px; color: #333; }
.t-k { font-size: 16px; color: #444; }
.t-s { font-size: 16px; color: #444; text-decoration: underline; }
.wrap-b { display: flex; align-items: center; gap: 4px; margin-left: 9px; white-space: nowrap; }
.svg-ab { font: 11px "Open Sans", sans-serif; fill: #444; }
.merge { margin-left: 2px; width: 182px; height: 29px; background: #d2d0ce; border: 1px solid #8a8886; display: flex; align-items: center; padding-left: 3px; gap: 6px; white-space: nowrap; flex: none; }
.m-ch { margin-left: auto; margin-right: 7px; }
.t-pct { font-size: 22px; color: #444; font-weight: 300; }
.t-000 { font-size: 11.500px; color: #555; letter-spacing: -.3px; }
.dec { display: flex; flex-direction: column; font-size: 10.500px; line-height: 11px; color: #444; text-align: right; letter-spacing: -.4px; font-weight: 600; }
.dec-a { color: #2b7cd3; }
.dec-k { color: #444; }

.bigs { display: grid; }
.sty-cols { grid-template-columns: 100px 90px 74px; padding-left: 9px; }
.cel-cols { grid-template-columns: 62px 52px 68px; padding-left: 6px; }
.edi-cols { grid-template-columns: 120px 70px 94px; padding-left: 14px; }
.big { display: flex; flex-direction: column; align-items: center; min-width: 0; }
.big-ic { height: 45px; padding-top: 8px; display: flex; justify-content: center; align-items: flex-start; flex: none; width: 100%; }
.ic-up { padding-top: 3px; }
.ic-mid { padding-top: 5px; }
.edi-list { display: flex; flex-direction: column; margin-top: -2px; }
.ed-row { height: 29px; display: flex; align-items: center; gap: 5px; white-space: nowrap; color: #444; }
.sigma { margin-right: 2px; }
.ed-ch1 { margin-left: 10px; }
.svg-az { font: 17px "Open Sans", sans-serif; fill: #444; }
.svg-az.a { fill: #2b88d8; }
.svg-x { font: 700 13px "Open Sans", sans-serif; fill: #fff; text-anchor: middle; }

/* formula bar */
.formula { height: 55px; flex: none; background: #e6e6e6; display: flex; align-items: flex-start; padding: 13px 0 0 6px; color: #444; }
.namebox { width: 127px; height: 30px; background: #fff; border: 1px solid #c8c6c4; display: flex; align-items: center; justify-content: space-between; padding: 0 8px 0 6px; font-size: 16px; flex: none; }
.fdots { width: 37px; height: 30px; display: flex; flex-direction: column; align-items: center; justify-content: center; gap: 3px; flex: none; }
.fdots i, .hdots i { display: block; width: 3px; height: 3px; background: #a6a6a6; }
.fbtns { width: 137px; height: 30px; background: #fff; border: 1px solid #c8c6c4; display: flex; align-items: center; padding-left: 15px; flex: none; }
.fbtns svg:nth-child(2) { margin-left: 30px; }
.fx { margin-left: 27px; font: italic 700 17px "Liberation Serif", serif; color: #777; }
.fbox { margin-left: 3px; width: 1605px; height: 30px; background: #fff; border: 1px solid #c8c6c4; display: flex; align-items: center; padding: 0 6px 0 13px; font-size: 15.800px; justify-content: space-between; flex: none; }

/* sheet */
.grid-wrap { height: 719px; flex: none; display: flex; background: #e6e6e6; overflow: hidden; }
.grid-main { width: 1895px; flex: none; display: flex; flex-direction: column; }
.colhead { height: 21px; display: flex; flex: none; background: #e6e6e6; }
.corner { width: 34px; flex: none; display: flex; align-items: flex-end; justify-content: flex-end; padding: 0 3px 1px 0; }
.ch { flex: none; text-align: center; font-size: 15.500px; line-height: 21px; color: #444; border-right: 1px solid #c4c4c4; height: 21px; overflow: hidden; }
.ch.sel { background: #d2d2d2; color: #217346; border-right-color: #a9a9a9; }
.ch.a { width: 99px; } .ch.b { width: 504px; } .ch.c { width: 49px; } .ch.d { width: 85px; } .ch.e { width: 78px; } .ch.f { width: 82px; } .ch.g { width: 84px; } .ch.h { width: 105px; } .ch.i { width: 105px; }
.ch.j { width: 5px; }
.ch.k { width: 103px; }
.ch.rest { flex: 1; border-right: 0; }
.sheet-row { flex: 1; display: flex; min-height: 0; }
.sheet-clip { width: 1227px; flex: none; overflow: hidden; background: #fff; }
.outside { flex: 1; background: #a0a0a0; border-left: 3px solid #0000cd; }
.sheet { table-layout: fixed; width: 1227px; border-collapse: separate; border-spacing: 0; font-family: "Liberation Sans", Arial, sans-serif; font-size: 14.400px; color: #000; }
.k-rh { width: 34px; } .k-a { width: 99px; } .k-b { width: 504px; } .k-c { width: 49px; } .k-d { width: 85px; } .k-e { width: 78px; } .k-f { width: 82px; } .k-g { width: 84px; } .k-h { width: 105px; } .k-i { width: 105px; } .k-j { width: 2px; }
.h4 { height: 4px; } .h5 { height: 5px; } .h6 { height: 6px; } .h25 { height: 25px; } .h26 { height: 26px; } .h28 { height: 28px; } .h29 { height: 29px; } .h35 { height: 35px; } .h47 { height: 47px; } .h53 { height: 53px; } .h61 { height: 61px; }
.sheet th { padding: 0; background: #e6e6e6; border-bottom: 1px solid #c4c4c4; border-right: 1px solid #0000cd; font: 400 15.500px/18px "Open Sans", sans-serif; color: #444; vertical-align: bottom; text-align: center; overflow: hidden; line-height: 18px; }
.sheet th.sel { background: #d2d2d2; color: #217346; border-right: 0; padding-bottom: 7px; }
.sheet td { padding: 0 3px 1px; border-right: 1px solid #d4d4d4; border-bottom: 1px solid #d4d4d4; vertical-align: bottom; white-space: nowrap; line-height: 17px; overflow: hidden; }
.sheet td.jc { padding: 0; border-right: 0; }
.title { text-align: center; border: 2px solid #217346 !important; vertical-align: middle !important; position: relative; overflow: visible !important; padding-top: 3px !important; }
.title span { font: 700 27.500px/32px "Liberation Sans", Arial, sans-serif; color: #3a3500; letter-spacing: 1.600px; -webkit-text-stroke: .7px #3a3500; }
.handle { position: absolute; right: -4px; bottom: -4px; width: 6px; height: 6px; background: #217346; border: 1px solid #fff; }
.bold { font-weight: 700; }
.sheet td.obra { font-size: 16.500px; padding-left: 3px; padding-bottom: 1px; }
.obra-k { display: inline-block; width: 74px; }
.sheet td.info { padding-left: 2px; padding-bottom: 1px; }
.sheet tr.h28 td.info { padding-bottom: 0; }
.sheet td.plain { padding-left: 2px; padding-bottom: 1px; }
.lab, .col, .val { display: inline-block; }
.lab { font-size: 15.100px; }
.p1 { width: 132px; } .p3 { width: 130px; } .p4 { width: 133px; } .p5 { width: 158px; font-size: 14.700px; } .p6 { width: 139px; }
.p2 { width: 27px; } .p7 { width: 18px; }
.sheet tr.hd td { background: #0070c0; color: #fff; font: 700 15.500px/18px "Open Sans", sans-serif; letter-spacing: -.2px; text-align: center; vertical-align: middle; padding: 1px 0 0; border-right: 1px solid #000; border-bottom: 1px solid #000; overflow: hidden; }
.sheet tr.hd:not(.hd2) td { border-top: 2px solid #000; }
.sheet tr.hd2 td { padding-top: 2px; }
.sheet tr.hd td.jc, .sheet tr.sp td.jc { background: #fff; border: 0; }
.sheet tr.sp td { border-right: 1px solid #d4d4d4; border-bottom: 1px solid #33339e; padding: 0; }
.sheet tr.d td { font-size: 16.400px; border-right: 1px solid #33339e; border-bottom: 1px solid #33339e; padding: 0 4px 0 3px; }
.sheet tr.d td.jc { border: 0; padding: 0; }
.sheet tr.fill td { background: #8db4e2; }
.sheet tr.fill td.jc { background: #fff; }
.sheet tr.fill td.bold { line-height: 19px; }
.two { line-height: 22px; margin-bottom: -2px; }
.sheet tr.d td.num { text-align: right; padding-right: 8px; }
.sheet tr.d td.q { padding-right: 10px; }
.ctr { text-align: center; }

.vscroll { flex: 1; background: #e6e6e6; display: flex; flex-direction: column; align-items: center; padding: 3px 0 1px; }
.sb-btn { width: 19px; height: 18px; background: #fff; border: 1px solid #b5b5b5; display: flex; align-items: center; justify-content: center; flex: none; }
.sb-thumb { width: 19px; height: 22px; background: #fff; border: 1px solid #b5b5b5; flex: none; }
.sb-fill { flex: 1; }

/* tabs */
.tabbar { height: 29px; flex: none; background: #e6e6e6; display: flex; border-bottom: 1px solid #c8c8c8; }
.tabnav { width: 103px; flex: none; display: flex; align-items: center; gap: 22px; padding: 4px 0 0 28px; }
.tab { flex: none; text-align: center; font-family: "Open Sans", sans-serif; font-size: 15.500px; line-height: 22px; white-space: nowrap; }
.t-met { width: 109px; height: 26px; background: linear-gradient(#fff, #9cf09c); color: #217346; font-weight: 700; border-left: 1px solid #a9a9a9; border-right: 1px solid #a9a9a9; border-bottom: 2px solid #217346; }
.t-ace { width: 74px; height: 23px; margin: 3px 0 0 2px; background: #ffff00; color: #222; line-height: 18px; }
.tab-end { width: 1px; height: 23px; margin: 3px 0 0 2px; background: #a9a9a9; flex: none; }
.addsheet { width: 20px; margin: 5px 0 0 33px; flex: none; }
.hdots { margin-left: 1176px; width: 16px; display: flex; flex-direction: column; justify-content: center; align-items: center; gap: 3px; flex: none; }
.hscroll { width: 345px; height: 19px; margin: 5px 0 0 9px; display: flex; flex: none; background: #d9d9d9; }
.hb { width: 18px; background: #fff; border: 1px solid #b5b5b5; display: flex; align-items: center; justify-content: center; flex: none; }
.hthumb { width: 20px; background: #fff; border: 1px solid #b5b5b5; flex: none; }
.htrack { flex: 1; }

/* status bar */
.status { height: 27px; flex: none; background: #f3f2f1; display: flex; align-items: center; font-size: 12.500px; color: #444; }
.ready { margin-left: 9px; width: 1538px; flex: none; }
.views { display: flex; width: 151px; height: 27px; flex: none; }
.vw { width: 51px; display: flex; align-items: center; justify-content: center; flex: none; height: 27px; }
.vw.on { width: 50px; background: #d2d0ce; }
.vw:first-child { width: 50px; }
.zoom { display: flex; align-items: center; }
.z-minus { display: block; width: 10px; height: 1px; background: #555; margin-left: 6px; flex: none; }
.z-track { width: 125px; height: 1px; background: #a6a6a6; margin: 0 5px 0 7px; position: relative; flex: none; }
.z-track i { position: absolute; left: 60px; top: -7px; width: 6px; height: 15px; background: #767676; }
.z-pct { margin-left: 17px; font-size: 12.500px; color: #666; }

/* taskbar */
.taskbar { height: 50px; flex: none; background: linear-gradient(90deg, #cee5ee 0%, #cfe3ed 40%, #d3e0ec 70%, #d3dfeb 100%); display: flex; align-items: center; color: #111; }
.tk { height: 50px; display: flex; align-items: center; justify-content: center; flex: none; }
.app-ic { width: 51px; margin-left: 11px; border-bottom: 3px solid #0078d4; padding-top: 3px; }
.app-ic.first { margin-left: 9px; }
.tray { margin-left: auto; display: flex; align-items: center; height: 50px; padding-right: 15px; }
.ty { display: flex; align-items: center; justify-content: center; flex: none; }
.rel { position: relative; }
.tray-dot { position: absolute; right: 4px; bottom: -3px; width: 9px; height: 9px; border-radius: 50%; background: #2b6fc2; }
.t-esp { font-size: 13.500px; }
.clock { width: 92px; display: flex; flex-direction: column; align-items: center; font-size: 13.800px; line-height: 23px; flex: none; }
.notif { width: 52px; display: flex; justify-content: center; position: relative; flex: none; }
.badge { position: absolute; left: 27px; top: 9px; width: 20px; height: 20px; border-radius: 50%; background: #cfd8e2; border: 1px solid #777; font-size: 13px; font-weight: 600; text-align: center; line-height: 18px; }
```
